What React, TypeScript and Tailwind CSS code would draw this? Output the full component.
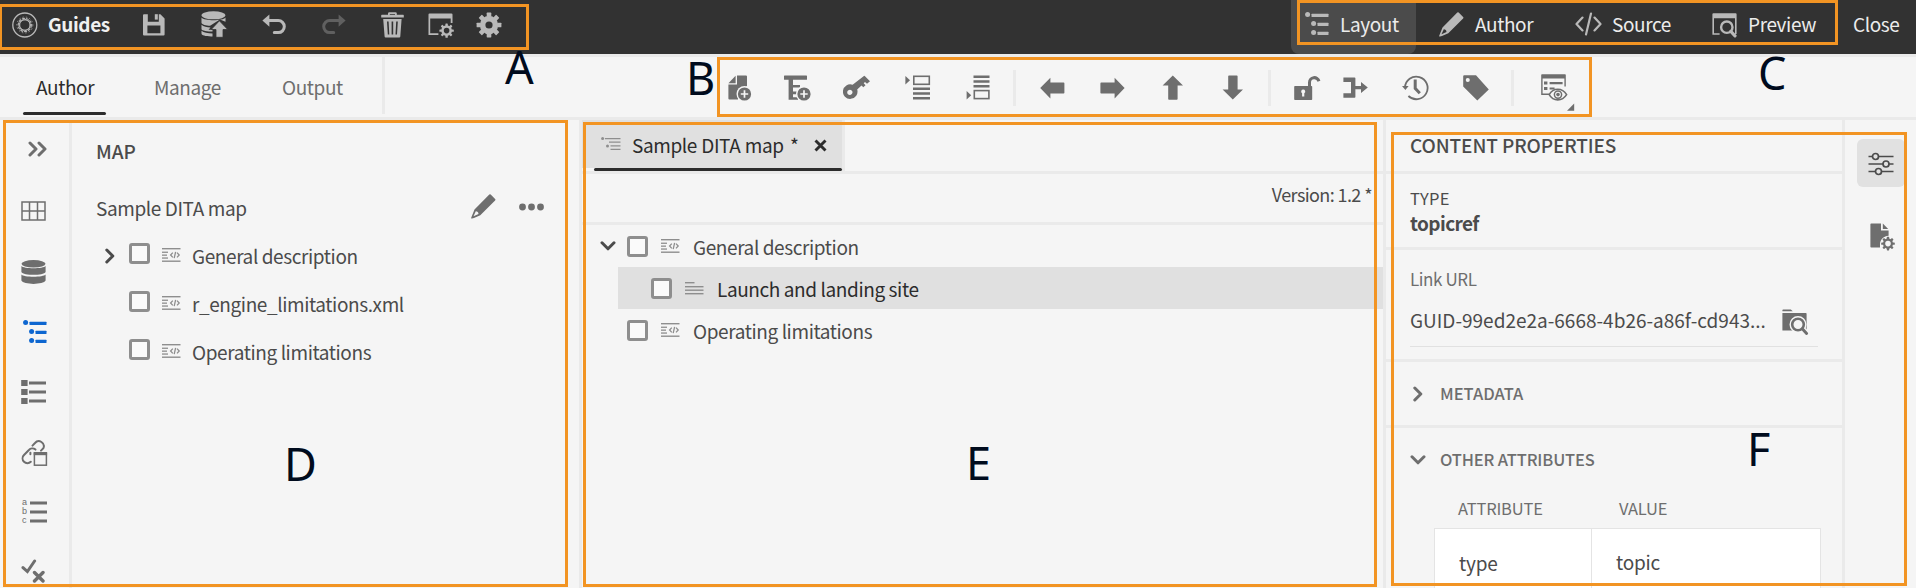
import React from 'react';

type IconProps = { w: number; h: number; className?: string; children: React.ReactNode };

function Icon({ w, h, className = '', children }: IconProps) {
  return (
    <svg width={w} height={h} viewBox={`0 0 ${w} ${h}`} fill="currentColor" className={`block shrink-0 ${className}`}>
      {children}
    </svg>
  );
}

const teeth = [0, 45, 90, 135, 180, 225, 270, 315];

function Gear({ cx, cy, r, hole, tooth }: { cx: number; cy: number; r: number; hole: number; tooth: number }) {
  const body = r * 0.74;
  return (
    <g>
      <circle cx={cx} cy={cy} r={(body + hole) / 2} fill="none" stroke="currentColor" strokeWidth={body - hole} />
      {teeth.map((a) => (
        <rect key={a} x={cx - tooth / 2} y={cy - r} width={tooth} height={r - body + 1} rx={0.6} transform={`rotate(${a} ${cx} ${cy})`} />
      ))}
    </g>
  );
}

function Pencil({ className = '' }: { className?: string }) {
  return (
    <Icon w={25} h={25} className={className}>
      <path d="M18.3.6a1 1 0 0 1 1.4 0l4.4 4.4a1 1 0 0 1 0 1.4L9.3 21.2 3 23.9l-2 .6a.6.6 0 0 1-.8-.8L3.5 15.4ZM4.8 17.2 2.5 22.2l5-2.3c-.1-1.7-1-2.6-2.7-2.7Z" fillRule="evenodd" />
    </Icon>
  );
}

function Outline({ className = '' }: { className?: string }) {
  return (
    <Icon w={24} h={24} className={className}>
      <circle cx="2.6" cy="2.6" r="2.5" />
      <circle cx="8.6" cy="11.6" r="2.5" />
      <circle cx="8.6" cy="20.6" r="2.5" />
      <rect x="6.5" y="1.7" width="17" height="3.2" rx=".5" />
      <rect x="12.5" y="10.7" width="11" height="3.2" rx=".5" />
      <rect x="12.5" y="19.7" width="11" height="3.2" rx=".5" />
    </Icon>
  );
}

function MapTag({ className = '' }: { className?: string }) {
  return (
    <Icon w={19} h={14} className={`text-[#8e8e8e] ${className}`}>
      <rect x="0" y="0" width="18.5" height="1.4" />
      <rect x="0" y="12.5" width="18.5" height="1.4" />
      <rect x="0" y="3.6" width="6" height="1.3" />
      <rect x="0" y="6.5" width="5" height="1.3" />
      <rect x="0" y="9.4" width="6" height="1.3" />
      <path d="M10.8 4.6 8.6 7l2.2 2.4M15 4.6 17.2 7 15 9.4M13.6 3.8l-1.4 6.4" fill="none" stroke="currentColor" strokeWidth="1.3" />
    </Icon>
  );
}

function TopicTag({ className = '' }: { className?: string }) {
  return (
    <Icon w={19} h={13} className={`text-[#8e8e8e] ${className}`}>
      <rect x="0" y="0" width="9.5" height="1.4" />
      <rect x="0" y="4" width="18.5" height="1.4" />
      <rect x="0" y="7.5" width="18.5" height="1.4" />
      <rect x="0" y="11" width="18.5" height="1.4" />
    </Icon>
  );
}

function Checkbox({ className = '' }: { className?: string }) {
  return <span className={`block h-[21px] w-[21px] shrink-0 rounded-[3px] border-[3px] border-[#8e8e8e] bg-[#fafafa] ${className}`} />;
}

function ChevronRight({ className = '' }: { className?: string }) {
  return (
    <Icon w={10} h={16} className={className}>
      <path d="M1.8 2 7.8 8l-6 6" fill="none" stroke="currentColor" strokeWidth="3" strokeLinecap="round" strokeLinejoin="round" />
    </Icon>
  );
}

function ChevronDown({ className = '' }: { className?: string }) {
  return (
    <Icon w={16} h={10} className={className}>
      <path d="M2 1.8l6 6 6-6" fill="none" stroke="currentColor" strokeWidth="3" strokeLinecap="round" strokeLinejoin="round" />
    </Icon>
  );
}

function PlusBadge({ cx, cy }: { cx: number; cy: number }) {
  return (
    <g>
      <circle cx={cx} cy={cy} r="8" fill="#f5f5f5" />
      <circle cx={cx} cy={cy} r="6.6" />
      <path d={`M${cx - 3.7} ${cy}h7.4M${cx} ${cy - 3.7}v7.4`} stroke="#f5f5f5" strokeWidth="1.7" />
    </g>
  );
}

function TopBar() {
  return (
    <header className="flex h-[54px] items-center bg-[#323232] pb-[5px] text-[#b9b9b9]">
      <Icon w={26} h={26} className="ml-[12px]">
        <g fill="none" stroke="currentColor">
          <circle cx="12.8" cy="13" r="12" strokeWidth="1.3" />
          <circle cx="12.8" cy="13" r="6.6" strokeWidth="1.1" strokeDasharray="3 1" />
          <rect x="7.8" y="8" width="10" height="10" rx="3.4" strokeWidth=".9" />
          <rect x="7.8" y="8" width="10" height="10" rx="3.4" strokeWidth=".9" transform="rotate(45 12.8 13)" />
          <circle cx="12.8" cy="13" r="8" strokeWidth=".7" strokeDasharray="1.5 2" />
        </g>
      </Icon>
      <span className="-mt-[2px] ml-[10px] w-[95px] text-[19px] leading-6 font-bold tracking-[-0.4px] text-[#f0f0f0]">Guides</span>
      <Icon w={22} h={22}>
        <path d="M0 1.2A1 1 0 0 1 1 .2h3.8v7.6h11V.2h1.6l4.2 4.2V20.6a1 1 0 0 1-1 1H1a1 1 0 0 1-1-1ZM4.4 11.4v7.8h13v-7.8Z" fillRule="evenodd" />
        <rect x="11.8" y=".2" width="3" height="5.4" />
      </Icon>
      <Icon w={27} h={27} className="ml-[36px]">
        <ellipse cx="12.5" cy="4.3" rx="12" ry="4" />
        <path d="M.5 6.6c3 3.6 21 3.6 24 0v4.2l-5.6-2.4-9.8 6.4C5 14.6 1 13.6.5 12Z" />
        <path d="M.5 13.8c2 1.900 5.500 2.500 9 2.600l-2 2.300h4V20.500c-4.600 0-11-.8-11-2.600Z" />
        <path d="M.5 19.700c2 1.900 6.500 2.700 11 2.700v3C5 25.600.5 24.400.5 22.500Z" />
        <path d="M18.400 9.800l8.300 8.700H22v7.800h-7v-7.800h-4.800Z" stroke="#323232" strokeWidth=".8" />
      </Icon>
      <Icon w={25} h={22} className="ml-[34px]">
        <path d="M7.400.5v12.200L.4 6.600Z" />
        <path d="M5 6.600h11.300a6 6 0 0 1 0 12h-4" fill="none" stroke="currentColor" strokeWidth="3" strokeLinecap="round" />
      </Icon>
      <Icon w={25} h={22} className="ml-[34px] text-[#606060]">
        <g transform="translate(25 0) scale(-1 1)">
          <path d="M7.400.5v12.200L.4 6.600Z" />
          <path d="M5 6.600h11.300a6 6 0 0 1 0 12h-4" fill="none" stroke="currentColor" strokeWidth="3" strokeLinecap="round" />
        </g>
      </Icon>
      <Icon w={24} h={26} className="ml-[35px]">
        <path d="M7 2.800V1.600A1.400 1.400 0 0 1 8.400.2h6A1.400 1.400 0 0 1 15.800 1.600v1.200h6.400a.6.6 0 0 1 .6.6V5.400H.2V3.400a.6.6 0 0 1 .6-.6Zm1.800 0h5.200V2H8.800Z" fillRule="evenodd" />
        <path d="M2.200 7h18.400l-1.300 17.600a1 1 0 0 1-1 .9H4.600a1 1 0 0 1-1-.9ZM6 9.500l.8 13h1.500l-.7-13Zm4.600 0v13h1.600v-13Zm4.600 0-.7 13H16l.8-13Z" fillRule="evenodd" />
      </Icon>
      <Icon w={27} h={25} className="mt-[2px] ml-[23px]">
        <path d="M.5 1.400a1 1 0 0 1 1-1h22a1 1 0 0 1 1 1V10h-1.800V5.600H2.200v14.600h8.200V22H.5Z" />
        <Gear cx={18.600} cy={17.600} r={7.200} hole={2.800} tooth={2.400} />
      </Icon>
      <Icon w={26} h={26} className="ml-[21px]">
        <Gear cx={13} cy={13} r={12.400} hole={3.600} tooth={4.600} />
      </Icon>

      <nav className="-mb-[5px] ml-auto flex h-[54px] items-center text-[19px] leading-6 tracking-[-0.4px] text-[#ececec]">
        <div className="flex h-full w-[125px] items-center rounded-b-lg bg-[#4b4b4b] pb-[6px] pl-[14px]">
          <Outline className="text-[#b9b9b9]" />
          <span className="-mt-px ml-[11px]">Layout</span>
        </div>
        <div className="ml-[23px] flex w-[136px] items-center pb-[6px]">
          <Pencil className="text-[#b9b9b9]" />
          <span className="-mt-px ml-[11px]">Author</span>
        </div>
        <div className="flex w-[137px] items-center pb-[6px]">
          <Icon w={27} h={24} className="text-[#b9b9b9]">
            <path d="M7.500 5.600 1.500 12l6 6.400M19.500 5.600l6 6.400-6 6.400M16 1.600l-5 20.800" fill="none" stroke="currentColor" strokeWidth="2.200" strokeLinecap="round" strokeLinejoin="round" />
          </Icon>
          <span className="-mt-px ml-[10px]">Source</span>
        </div>
        <div className="flex w-[141px] items-center pb-[6px]">
          <Icon w={26} h={25} className="mt-[3px] text-[#b9b9b9]">
            <path d="M.4 1.200a1 1 0 0 1 1-1h22.200a1 1 0 0 1 1 1V21h-1.600V5.200H2v15h5.600V21.800H.4Z" />
            <circle cx="14.800" cy="14.200" r="5.700" fill="none" stroke="currentColor" strokeWidth="2.400" />
            <path d="M18.800 18.400 23 22.800" stroke="currentColor" strokeWidth="3.200" strokeLinecap="round" />
          </Icon>
          <span className="-mt-px ml-[10px]">Preview</span>
        </div>
        <span className="w-[63px] pb-[7px]">Close</span>
      </nav>
    </header>
  );
}

function Divider({ className = '' }: { className?: string }) {
  return <span className={`block h-[36px] w-[3px] shrink-0 bg-[#eaeaea] ${className}`} />;
}

function ToolBar() {
  return (
    <div className="flex h-[66px] border-y-[3px] border-[#eaeaea] text-[#6e6e6e]">
      <div className="flex h-[57px] w-[385px] border-r-[3px] border-[#eaeaea] pl-[23px] text-[19px] leading-6 tracking-[-0.4px]">
        <div className="flex w-[83px] flex-col justify-between pt-[18px]">
          <span className="pl-[13px] text-[#2c2c2c]">Author</span>
          <span className="-mb-px h-[3px] rounded-full bg-[#2c2c2c]" />
        </div>
        <span className="ml-[48px] w-[128px] pt-[18px]">Manage</span>
        <span className="pt-[18px]">Output</span>
      </div>
      <div className="flex h-[60px] items-center pt-px">
        <Icon w={25} h={26} className="ml-[343px]">
          <path d="M9 .4h9a1 1 0 0 1 1 1V11l-9 7v6.600H1.400a1 1 0 0 1-1-1V9.600H9Z" />
          <path d="M7.600.8v7.400H.4Z" />
          <PlusBadge cx={16.500} cy={19} />
        </Icon>
        <Icon w={28} h={26} className="ml-[31px]">
          <rect x="0" y=".4" width="23" height="4.400" rx=".6" />
          <path d="M4.600 4h3v6H16v2.600H7.600v4H14v2.600H7.600v3H14v2.600H4.600Z" />
          <path d="M6 4h3v20H6Z" />
          <PlusBadge cx={20} cy={19} />
        </Icon>
        <Icon w={28} h={25} className="ml-[31px]">
          <path d="M20.600 1.200a1 1 0 0 1 1.400 0l5 5-3 2.600-2-1.800-1.300 1.300 1.800 1.900-2.200 2-1.800-1.700-4.300 4a7.300 7.300 0 1 1-4.600-4.800ZM5.400 15.200a2.600 2.600 0 1 0 3.600 3.600 2.600 2.600 0 0 0-3.600-3.600Z" fillRule="evenodd" />
        </Icon>
        <Icon w={26} h={25} className="ml-[34px]">
          <path d="M.4 1v8.400L5 5.200Z" />
          <rect x="8.800" y="1.300" width="15.500" height="8" fill="none" stroke="currentColor" strokeWidth="1.600" />
          <path d="M8 12.400h17v2.600H8ZM8 17.200h17v2.600H8ZM8 22h17v2.600H8Z" />
        </Icon>
        <Icon w={25} h={25} className="ml-[35px]">
          <path d="M.6 16v8.400L5.200 20.200Z" />
          <rect x="8.300" y="15.600" width="14.600" height="8" fill="none" stroke="currentColor" strokeWidth="1.600" />
          <path d="M7.500.4h16V3h-16ZM7.500 5.200h16v2.600h-16ZM7.500 10h16v2.600h-16Z" />
        </Icon>
        <Divider className="ml-[22px]" />
        <Icon w={25} h={22} className="ml-[24px]">
          <path d="M.2 11 10.400.8V5.600h13.200a.8.8 0 0 1 .8.8v9.400a.8.8 0 0 1-.8.800H10.400v4.800Z" />
        </Icon>
        <Icon w={25} h={22} className="ml-[35px]">
          <path d="M24.600 11 14.600.8V5.600H1.200a.8.8 0 0 0-.8.800v9.400a.8.8 0 0 0 .8.800h13.400v4.800Z" />
        </Icon>
        <Icon w={22} h={25} className="ml-[37px]">
          <path d="M10.800.4 21 10.600h-5.400V24a.8.8 0 0 1-.8.800H7a.8.8 0 0 1-.8-.8V10.600H.6Z" />
        </Icon>
        <Icon w={22} h={25} className="ml-[38px]">
          <path d="M10.800 24.600 21 14.600h-5.400V1.200a.8.800 0 0 0-.8-.8H7a.8.800 0 0 0-.8.800V14.600H.6Z" />
        </Icon>
        <Divider className="ml-[24px]" />
        <Icon w={27} h={27} className="ml-[23px]">
          <path d="M.2 12.800a.8.800 0 0 1 .8-.8H14V8.400a6.300 6.300 0 0 1 12.400-1.600l-2.900.9A3.300 3.300 0 0 0 17 8.600V12h.4a.8.800 0 0 1 .8.800v12.400a.8.800 0 0 1-.8.800H1a.8.800 0 0 1-.8-.8ZM9.200 15.600a2 2 0 0 0-1.100 3.700v3.300h2.200v-3.300a2 2 0 0 0-1.100-3.700Z" fillRule="evenodd" />
        </Icon>
        <Icon w={26} h={21} className="-mt-[1px] ml-[22px]">
          <path d="M.4.400h11.200a.8.800 0 0 1 .8.800V9H18V5l6.800 5.600L18 16V12.200h-5.600V20a.8.800 0 0 1-.8.800H.4V16.200H8V5H.400Z" />
        </Icon>
        <Icon w={27} h={26} className="ml-[33px]">
          <path d="M3 12.600a11.300 11.300 0 1 1 3.400 8.400" fill="none" stroke="currentColor" strokeWidth="1.800" />
          <path d="M0 11h6.600L3.400 15Z" />
          <path d="M13.200 4.400v9l4.600 4.800" fill="none" stroke="currentColor" strokeWidth="3" />
        </Icon>
        <Icon w={27} h={26} className="ml-[34px]">
          <path d="M.2 1.200a1 1 0 0 1 1-1H13L25.800 14.400 14.300 25.600 .2 11.600ZM4.700 2.900a2 2 0 1 0 .1 4 2 2 0 0 0 0-4Z" fillRule="evenodd" />
        </Icon>
        <Divider className="ml-[21px]" />
        <Icon w={34} h={38} className="mt-[11px] ml-[27px]">
          <path d="M.2 1a.8.800 0 0 1 .8-.8h23a.8.800 0 0 1 .8.800v11.600h-1.400V4.400H1.600v15.200H8V21H.2Z" />
          <path d="M3 7.600h3.400v3H3ZM8.600 8h13v2.200H8.600ZM3 13h3.400v3H3ZM8.600 13.400h5v2.200h-5Z" />
          <path d="M8.200 20.600c4-7.200 13-7.200 17.400 0-4.400 7-13.400 7-17.400 0Z" fill="#f5f5f5" stroke="currentColor" strokeWidth="1.600" />
          <circle cx="17" cy="20.600" r="3.600" fill="none" stroke="currentColor" strokeWidth="1.500" />
          <circle cx="17" cy="20.600" r="1.800" />
          <path d="M33.200 29.500v7.200H26Z" />
        </Icon>
      </div>
    </div>
  );
}

function LeftRail() {
  return (
    <aside className="flex w-[72px] flex-col border-r-[3px] border-[#eaeaea] pt-[21px] text-[#6e6e6e]">
      <Icon w={20} h={16} className="ml-[28px]">
        <path d="M2 2l6 6-6 6M11 2l6 6-6 6" fill="none" stroke="currentColor" strokeWidth="3" strokeLinecap="round" strokeLinejoin="round" />
      </Icon>
      <Icon w={25} h={20} className="mt-[44px] ml-[21px]">
        <path d="M1 1h23v18H1ZM1 10h23M8.500 1v18M16.500 1v18" fill="none" stroke="currentColor" strokeWidth="1.500" />
      </Icon>
      <Icon w={25} h={25} className="mt-[39px] ml-[21px]">
        <ellipse cx="12.500" cy="3.800" rx="12" ry="3.700" />
        <path d="M.4 6c2 3 22.200 3 24.200 0v6c-2 3.800-22.200 3.800-24.200 0ZM.4 14.400c2 3 22.200 3 24.200 0v6.200c-2 4.400-22.200 4.400-24.200 0Z" />
      </Icon>
      <Outline className="mt-[35px] ml-[23px] text-[#0d66d0]" />
      <Icon w={25} h={24} className="mt-[36px] ml-[21px]">
        <path d="M.2 0h6.400v6H.2ZM.2 9h6.400v6H.2ZM.2 18h6.400v6H.2ZM8 1.500h17v3H8ZM8 10.500h17v3H8ZM8 19.500h17v3H8Z" />
      </Icon>
      <Icon w={27} h={27} className="mt-[36px] ml-[21px]">
        <g fill="none" stroke="currentColor" strokeWidth="2" strokeLinecap="round">
          <path d="M11.500 5.600 14 3a5 5 0 0 1 8.400 5.200L20 10.600" />
          <path d="M14.500 9.600c-2.200-1.800-5-1.400-6.600.4L3 15a4.800 4.800 0 0 0 6.800 6.800" />
          <path d="M9.400 12.800v1.400" />
        </g>
        <rect x="13.400" y="13.200" width="12" height="12" fill="#f5f5f5" stroke="currentColor" strokeWidth="1.500" />
        <rect x="12.700" y="12" width="13.400" height="3.200" />
      </Icon>
      <div className="mt-[32px] ml-[22px] flex h-[26px] items-center">
        <div className="-mt-px flex w-[8px] flex-col font-['Liberation_Sans',sans-serif] text-[9px] leading-[9px]">
          <span>a</span>
          <span>b</span>
          <span>c</span>
        </div>
        <Icon w={17} h={24}>
          <path d="M0 1.500h17v3H0ZM0 10.500h17v3H0ZM0 19.500h17v3H0Z" />
        </Icon>
      </div>
      <Icon w={24} h={25} className="mt-[34px] ml-[21px]">
        <path d="M2 8.600l4.400 4L13.600 2" fill="none" stroke="currentColor" strokeWidth="3" strokeLinecap="round" />
        <path d="M13.500 13.500l8.500 8.500M22 13.500l-8.500 8.500" stroke="currentColor" strokeWidth="3.400" strokeLinecap="round" />
      </Icon>
    </aside>
  );
}

const mapTopics = [
  { title: 'General description', expandable: true },
  { title: 'r_engine_limitations.xml', expandable: false },
  { title: 'Operating limitations', expandable: false },
];

function MapPanel() {
  return (
    <section className="w-[507px] pl-[24px] text-[19px] leading-6 tracking-[-0.4px] text-[#4b4b4b]">
      <h2 className="flex h-[59px] items-center pt-[2px] font-medium tracking-[0px]">MAP</h2>
      <div className="mt-[4px] flex h-[47px] items-center">
        <span className="w-[375px] pt-[2px]">Sample DITA map</span>
        <Pencil className="text-[#6e6e6e]" />
        <Icon w={26} h={8} className="ml-[23px] text-[#6e6e6e]">
          <circle cx="3.500" cy="4" r="3.400" />
          <circle cx="12.500" cy="4" r="3.400" />
          <circle cx="21.500" cy="4" r="3.400" />
        </Icon>
      </div>
      {mapTopics.map((t) => (
        <div key={t.title} className="flex h-[48px] items-center">
          <span className="w-[33px] pt-[3px] pl-[9px]">{t.expandable && <ChevronRight />}</span>
          <Checkbox className="mb-px" />
          <MapTag className="mt-[2px] ml-[12px]" />
          <span className="ml-[11px] pt-[3px]">{t.title}</span>
        </div>
      ))}
    </section>
  );
}

function Editor() {
  return (
    <main className="flex w-[807px] flex-col border-x-[3px] border-[#eaeaea] text-[19px] leading-6 tracking-[-0.4px] text-[#4b4b4b]">
      <div className="flex h-[54px] border-b-[3px] border-[#eaeaea]">
        <div className="flex w-[263px] flex-col border-r-[3px] border-[#eaeaea] text-[#2c2c2c]">
          <div className="flex h-[48px] items-center bg-[#e0e0e0] pl-[19px]">
            <Icon w={20} h={14} className="text-[#8e8e8e]">
              <circle cx="1.600" cy="1.600" r="1.500" />
              <circle cx="6.500" cy="9" r="1.500" />
              <path d="M4 1h15.500v1.300H4ZM8 4.500h11.500v1.300H8ZM9.500 8.300h10v1.300h-10ZM9.500 11.800h10v1.300h-10Z" />
            </Icon>
            <span className="ml-[11px] w-[182px] pt-px [word-spacing:0.5px]">
              Sample DITA map <span className="ml-[2px]">*</span>
            </span>
            <Icon w={13} h={13} className="mt-[2px]">
              <path d="M1.500 1.500l10 10M11.500 1.500l-10 10" stroke="currentColor" strokeWidth="2.900" />
            </Icon>
          </div>
          <span className="ml-[12px] h-[3px] rounded-full bg-[#2c2c2c]" />
        </div>
      </div>
      <div className="flex h-[51px] items-center justify-end border-b-[3px] border-[#eaeaea] pr-[11px] pb-[9px] text-[18px] tracking-[-0.6px]">Version: 1.2 *</div>
      <div className="flex h-[42px] items-center pl-[18px]">
        <ChevronDown />
        <Checkbox className="ml-[11px]" />
        <MapTag className="ml-[13px]" />
        <span className="ml-[13px] pt-px">General description</span>
      </div>
      <div className="ml-[36px] flex h-[42px] items-center bg-[#e0e0e0] pl-[33px] text-[#2c2c2c]">
        <Checkbox />
        <TopicTag className="ml-[13px]" />
        <span className="ml-[13px] pt-px">Launch and landing site</span>
      </div>
      <div className="flex h-[42px] items-center pl-[45px]">
        <Checkbox />
        <MapTag className="ml-[13px]" />
        <span className="ml-[13px] pt-px">Operating limitations</span>
      </div>
    </main>
  );
}

function Properties() {
  return (
    <section className="w-[459px] border-r-[3px] border-[#eaeaea] text-[19px] leading-6 text-[#4b4b4b]">
      <h2 className="flex h-[54px] items-center border-b-[3px] border-[#eaeaea] pb-px pl-[24px] font-medium tracking-[-0.1px]">CONTENT PROPERTIES</h2>
      <div className="h-[76px] border-b-[3px] border-[#eaeaea] pt-[12px] pl-[24px]">
        <div className="text-[16.5px] tracking-[0.3px]">TYPE</div>
        <div className="leading-[26px] font-bold tracking-[-0.6px]">topicref</div>
      </div>
      <div className="h-[112px] border-b-[3px] border-[#eaeaea] px-[24px] pt-[17px]">
        <div className="text-[17px] tracking-[-0.4px] text-[#6e6e6e]">Link URL</div>
        <div className="flex h-[56px] items-center border-b border-[#e1e1e1]">
          <span className="w-[372px] pt-[2px]">GUID-99ed2e2a-6668-4b26-a86f-cd943...</span>
          <Icon w={27} h={27} className="mt-[8px] text-[#6e6e6e]">
            <path d="M.4 2.200V1.200A.8.800 0 0 1 1.200.4h7.600l2 1.800ZM.4 4h23.400a.8.800 0 0 1 .8.800V20.800a.8.800 0 0 1-.8.800H.4Z" />
            <path d="M20 19.500l4 4" stroke="#f5f5f5" strokeWidth="5.500" strokeLinecap="round" />
            <circle cx="16" cy="15.500" r="6" fill="#f5f5f5" stroke="#f5f5f5" strokeWidth="5" />
            <circle cx="16" cy="15.500" r="5.800" fill="none" stroke="currentColor" strokeWidth="2.600" />
            <path d="M20.300 19.800l4.300 4.600" stroke="currentColor" strokeWidth="3" strokeLinecap="round" />
          </Icon>
        </div>
      </div>
      <div className="flex h-[66px] items-center border-b-[3px] border-[#eaeaea] pl-[27px] text-[16.5px] font-medium text-[#6e6e6e]">
        <ChevronRight />
        <span className="ml-[17px] pb-[2px]">METADATA</span>
      </div>
      <div className="flex h-[63px] items-center pl-[24px] text-[16.5px] font-medium tracking-[-0.15px] text-[#6e6e6e]">
        <ChevronDown />
        <span className="ml-[14px] pb-[2px]">OTHER ATTRIBUTES</span>
      </div>
      <div className="flex h-[37px] items-center pb-[3px] pl-[72px] text-[16.5px] tracking-[-0.2px] text-[#6e6e6e]">
        <span className="w-[161px]">ATTRIBUTE</span>
        <span>VALUE</span>
      </div>
      <div className="ml-[48px] flex h-[67px] w-[387px] border border-[#e4e4e4] bg-white pt-px tracking-[-0.2px]">
        <div className="-mt-px flex w-[157px] items-center border-r border-[#e4e4e4] pt-[2px] pl-[24px]">type</div>
        <div className="flex items-center pl-[24px]">topic</div>
      </div>
    </section>
  );
}

function RightRail() {
  return (
    <aside className="flex flex-col pt-[19px] pl-[12px]">
      <div className="flex h-[48px] w-[48px] items-center justify-center rounded-md bg-[#e1e1e1] pt-px text-[#4b4b4b]">
        <Icon w={26} h={24}>
          <path d="M.5 4.500h25M.5 12h25M.5 19.500h25" stroke="currentColor" strokeWidth="1.700" />
          <g fill="#e1e1e1" stroke="currentColor" strokeWidth="1.700">
            <circle cx="7.500" cy="4.500" r="3" />
            <circle cx="18" cy="12" r="3" />
            <circle cx="10.500" cy="19.500" r="3" />
          </g>
        </Icon>
      </div>
      <Icon w={25} h={28} className="mt-[36px] ml-[13px] text-[#6e6e6e]">
        <path d="M.4 1.200a.8.800 0 0 1 .8-.8H11V7.500h7.600v5.200c-4.600 0-8.600 4-8.600 8.600v3.300H1.200a.8.800 0 0 1-.8-.8Z" />
        <path d="M12.800.6 18.200 6H12.800Z" />
        <Gear cx={18} cy={20.600} r={6.800} hole={2.800} tooth={2.400} />
      </Icon>
    </aside>
  );
}

const callouts = [
  { letter: 'A', box: 'left-[-1px] top-[4px] h-[46px] w-[530px]', label: 'left-[505px] top-[37px]' },
  { letter: 'B', box: 'left-[717px] top-[57px] h-[60px] w-[875px]', label: 'left-[686px] top-[48px]' },
  { letter: 'C', box: 'left-[1297px] top-0 h-[45px] w-[541px]', label: 'left-[1758px] top-[43px]' },
  { letter: 'D', box: 'left-[3px] top-[120px] h-[467px] w-[565px]', label: 'left-[284px] top-[434px]' },
  { letter: 'E', box: 'left-[583px] top-[122px] h-[465px] w-[794px]', label: 'left-[966px] top-[433px]' },
  { letter: 'F', box: 'left-[1391px] top-[132px] h-[454px] w-[516px]', label: 'left-[1747px] top-[419px]' },
];

export default function App() {
  return (
    <div className="relative h-[588px] w-[1916px] overflow-hidden bg-[#f5f5f5] font-['Noto_Sans_CJK_SC',sans-serif] whitespace-nowrap">
      <TopBar />
      <ToolBar />
      <div className="flex h-[468px] overflow-hidden">
        <LeftRail />
        <MapPanel />
        <Editor />
        <Properties />
        <RightRail />
      </div>
      {callouts.map((c) => (
        <React.Fragment key={c.letter}>
          <div className={`absolute border-[3px] border-[#f29423] ${c.box}`} />
          <div className={`absolute font-['Noto_Sans',sans-serif] text-[45px] leading-[60px] text-[#000b1d] ${c.label}`}>{c.letter}</div>
        </React.Fragment>
      ))}
    </div>
  );
}
